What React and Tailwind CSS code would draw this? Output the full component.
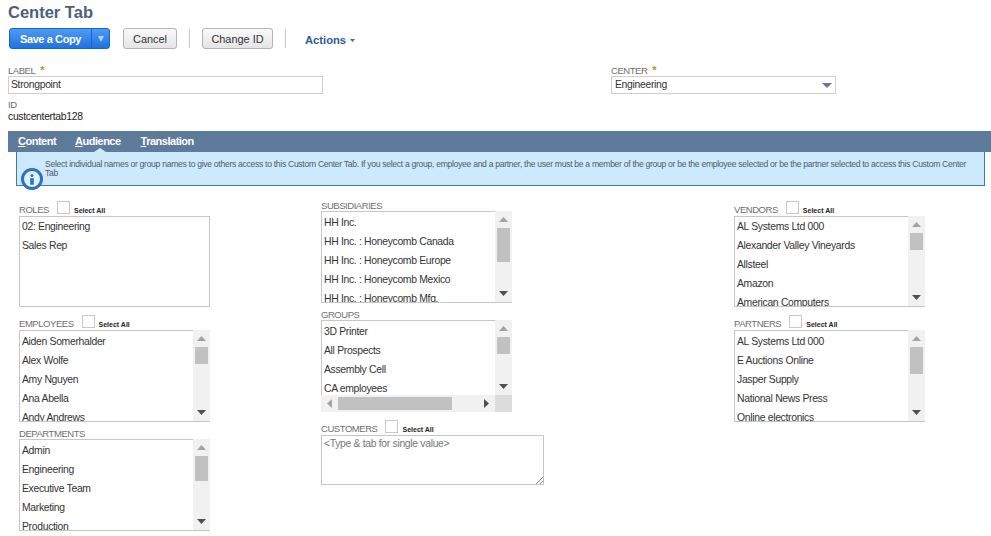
const FONT = "font-['Liberation_Sans',Arial,sans-serif]";
const BORDER = "border-[#c6c6c6]";
const TEXT = "text-[10.4px] tracking-[-0.32px]";
const LABEL = "text-[9.5px] tracking-[-0.45px] text-[#6f6f6f]";

function Label({ children, className = "" }) {
  return <div className={`${LABEL} leading-[11px] pt-[1px] h-[12px] ${className}`}>{children}</div>;
}

function Star() {
  return <span className="ml-[5px] text-[11px] leading-[11px] font-bold text-[#c98a1a] tracking-normal">*</span>;
}

function SelectAll({ label, gap = "ml-[8px]" }) {
  return (
    <div className="flex items-end h-[14px]">
      <span className={`${LABEL} leading-[10px]`}>{label}</span>
      <span className={`${gap} mb-[1px] block w-[13px] h-[13px] border border-[#c8c8c8] bg-white`} />
      <span className="ml-[4px] text-[7px] leading-[8px] font-bold text-[#222]">Select All</span>
    </div>
  );
}

function Tri({ up, color = "#555" }) {
  return (
    <svg width="9" height="5" viewBox="0 0 9 5" className="block">
      <path d={up ? "M4.5 0 L9 5 L0 5 Z" : "M0 0 L9 0 L4.5 5 Z"} fill={color} />
    </svg>
  );
}

function ListBox({ items, thumbH = "h-[17px]", h = "h-[92px]", horizontal = false, rows = "mt-[1px]" }) {
  return (
    <div className="flex flex-col w-[191px]">
      <div className="flex">
        <div className={`flex-1 min-w-0 ${h} overflow-hidden border-t border-l ${horizontal ? "" : "border-b"} ${BORDER} pl-[2px]`}>
          <div className={rows}>
            {items.map((t) => (
              <div key={t} className={`h-[19px] leading-[19px] ${TEXT} text-[#333] whitespace-nowrap`}>{t}</div>
            ))}
          </div>
        </div>
        <div className={`w-[17px] shrink-0 bg-[#f1f1f1] flex flex-col items-center ${h} ${horizontal ? "" : `border-b ${BORDER}`}`}>
          <div className="h-[17px] flex items-center justify-center"><Tri up color="#a3a3a3" /></div>
          <div className={`w-[13px] bg-[#c1c1c1] ${thumbH}`} />
          <div className="flex-1" />
          <div className="h-[17px] flex items-center justify-center"><Tri color="#505050" /></div>
        </div>
      </div>
      {horizontal && (
        <div className="flex h-[17px]">
          <div className="flex-1 bg-[#f1f1f1] flex items-center">
            <div className="w-[17px] flex justify-center">
              <svg width="5" height="9" viewBox="0 0 5 9"><path d="M5 0 L5 9 L0 4.5 Z" fill="#a3a3a3" /></svg>
            </div>
            <div className="w-[114px] h-[13px] bg-[#c1c1c1]" />
            <div className="flex-1 flex justify-end pr-[6px]">
              <svg width="5" height="9" viewBox="0 0 5 9"><path d="M0 0 L0 9 L5 4.5 Z" fill="#505050" /></svg>
            </div>
          </div>
          <div className="w-[17px] bg-[#dcdcdc]" />
        </div>
      )}
    </div>
  );
}

function Tab({ first, rest, className = "" }) {
  return (
    <span className={`text-[11px] tracking-[-0.5px] font-bold text-white ${className}`}>
      <span className="underline">{first}</span>{rest}
    </span>
  );
}

export default function App() {
  return (
    <div className={`${FONT} w-[991px] h-[536px] overflow-hidden bg-white text-[#333]`}>
      <div className="pl-[8px] pt-[2px]">
        <h1 className="text-[16.5px] leading-[20px] font-bold text-[#4d5f79]">Center Tab</h1>
      </div>

      <div className="flex items-center h-[21px] mt-[6px] pl-[9px]">
        <div className="flex h-[21px] w-[101px] rounded-[3px] border border-[#1467c9] bg-gradient-to-b from-[#4d9bf5] to-[#1f73de] text-white">
          <div className="w-[81px] text-center text-[11px] tracking-[-0.4px] leading-[20px] font-bold">Save a Copy</div>
          <div className="flex-1 border-l border-[#1467c9] flex items-center justify-center">
            <svg width="6" height="6" viewBox="0 0 6 6"><path d="M0 0 L6 0 L3 6 Z" fill="#b5d2f3" /></svg>
          </div>
        </div>
        <button className="ml-[13px] w-[54px] h-[21px] pt-[1px] rounded-[3px] border border-[#b5b5b5] bg-gradient-to-b from-[#fafafa] to-[#e5e5e5] text-[10.9px] text-[#333]">Cancel</button>
        <div className="ml-[12px] w-px h-[19px] bg-[#c9c9c9]" />
        <button className="ml-[12px] w-[71px] h-[21px] pt-[1px] rounded-[3px] border border-[#b5b5b5] bg-gradient-to-b from-[#fafafa] to-[#e5e5e5] text-[10.9px] text-[#333]">Change ID</button>
        <div className="ml-[12px] w-px h-[19px] bg-[#c9c9c9]" />
        <span className="ml-[19px] mt-[3px] text-[11.2px] font-bold text-[#2f5a94]">Actions</span>
        <svg width="5" height="3" viewBox="0 0 5 3" className="ml-[4px] mt-[4px]"><path d="M0 0 L5 0 L2.5 3 Z" fill="#4a6a95" /></svg>
      </div>

      <div className="flex mt-[15px] pl-[8px]">
        <div className="w-[603px]">
          <Label className="flex items-start">LABEL<Star /></Label>
          <div className={`w-[315px] h-[18px] border border-[#cfcfcf] pl-[2px] ${TEXT} leading-[16px] text-[#333]`}>Strongpoint</div>
        </div>
        <div>
          <Label className="flex items-start">CENTER<Star /></Label>
          <div className={`w-[225px] h-[18px] border border-[#cfcfcf] pl-[3px] flex items-center justify-between ${TEXT} leading-[16px] text-[#333]`}>
            <span>Engineering</span>
            <svg width="10" height="5" viewBox="0 0 10 5" className="mr-[3px]"><path d="M0 0 L10 0 L5 5 Z" fill="#65799c" /></svg>
          </div>
        </div>
      </div>

      <div className="pl-[8px] mt-[4px]">
        <Label>ID</Label>
        <div className={`${TEXT} mt-[1px] leading-[12px] text-[#222]`}>custcentertab128</div>
      </div>

      <div className="ml-[8px] mt-[8px] h-[21px] bg-[#5f7b9c] flex items-center pl-[10px] relative">
        <Tab first="C" rest="ontent" />
        <Tab first="A" rest="udience" className="ml-[19px]" />
        <Tab first="T" rest="ranslation" className="ml-[20px]" />
        <span className="absolute left-[86px] bottom-0 w-0 h-0 border-x-[6px] border-x-transparent border-b-[4px] border-b-[#cdeafc]" />
      </div>

      <div className="relative ml-[16px] w-[969px] h-[34px] bg-[#cdeafc] border border-[#3e78b5] border-t-0 pl-[28px] pr-[4px] pt-[8px] text-[8.6px] tracking-[-0.3px] leading-[9px] text-[#4f5b68]">
        Select individual names or group names to give others access to this Custom Center Tab. If you select a group, employee and a partner, the user must be a member of the group or be the employee selected or be the partner selected to access this Custom Center Tab
        <span className="absolute left-[4px] top-[16px] w-[22px] h-[22px] rounded-full border-[3px] border-[#2f6fc1] bg-[#dff1fc] flex items-center justify-center">
          <svg width="6" height="11" viewBox="0 0 6 11"><circle cx="3" cy="1.6" r="1.5" fill="#2f6fc1" /><rect x="1.2" y="4.2" width="3.6" height="6.5" fill="#2f6fc1" /></svg>
        </span>
      </div>

      <div className="flex">
        <div className="ml-[19px] w-[302px] pt-[15px]">
          <SelectAll label="ROLES" />
          <div className={`w-[191px] h-[91px] border ${BORDER} pl-[2px] mt-[1px] ${TEXT} text-[#333]`}>
            <div className="h-[19px] leading-[19px]">02: Engineering</div>
            <div className="h-[19px] leading-[19px]">Sales Rep</div>
          </div>
          <div className="mt-[8px]">
            <SelectAll label="EMPLOYEES" />
            <div className="mt-[1px]">
              <ListBox items={["Aiden Somerhalder", "Alex Wolfe", "Amy Nguyen", "Ana Abella", "Andy Andrews"]} />
            </div>
          </div>
          <Label className="mt-[5px]">DEPARTMENTS</Label>
          <ListBox items={["Admin", "Engineering", "Executive Team", "Marketing", "Production"]} thumbH="h-[25px]" />
        </div>

        <div className="w-[413px] pt-[13px]">
          <Label>SUBSIDIARIES</Label>
          <ListBox items={["HH Inc.", "HH Inc. : Honeycomb Canada", "HH Inc. : Honeycomb Europe", "HH Inc. : Honeycomb Mexico", "HH Inc. : Honeycomb Mfg."]} thumbH="h-[34px]" />
          <Label className="mt-[5px]">GROUPS</Label>
          <ListBox horizontal h="h-[75px]" items={["3D Printer", "All Prospects", "Assembly Cell", "CA employees"]} />
          <div className="mt-[8px]">
            <SelectAll label="CUSTOMERS" />
          </div>
          <div className={`mt-[1px] w-[223px] h-[50px] border ${BORDER} pl-[2px] pt-[2px] ${TEXT} leading-[12px] text-[#777] relative`}>
            {"<Type & tab for single value>"}
            <svg width="8" height="8" viewBox="0 0 8 8" className="absolute right-0 bottom-0"><path d="M1 8 L8 1 M5 8 L8 5" stroke="#666" strokeWidth="0.8" /></svg>
          </div>
        </div>

        <div className="pt-[15px]">
          <SelectAll label="VENDORS" />
          <div className="mt-[1px]">
            <ListBox h="h-[91px]" rows="" items={["AL Systems Ltd 000", "Alexander Valley Vineyards", "Allsteel", "Amazon", "American Computers"]} />
          </div>
          <div className="mt-[8px]">
            <SelectAll label="PARTNERS" />
          </div>
          <div className="mt-[1px]">
            <ListBox items={["AL Systems Ltd 000", "E Auctions Online", "Jasper Supply", "National News Press", "Online electronics"]} thumbH="h-[27px]" />
          </div>
        </div>
      </div>
    </div>
  );
}
